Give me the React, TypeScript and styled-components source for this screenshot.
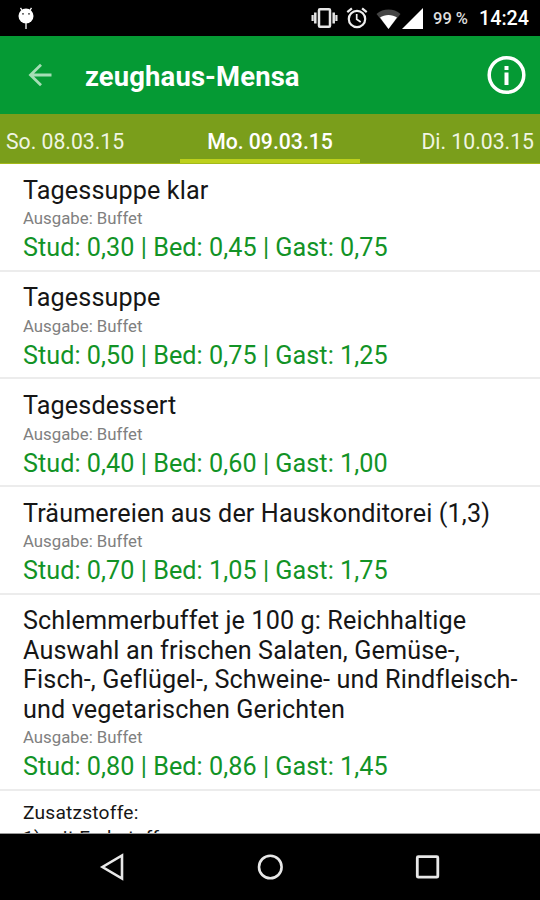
import React from "react";
import styled, { createGlobalStyle } from "styled-components";

const GlobalStyle = createGlobalStyle`
  body { margin: 0; background: #000; }
  * { box-sizing: border-box; }
`;

const Screen = styled.div`
  display: flex;
  flex-direction: column;
  width: 540px;
  height: 900px;
  overflow: hidden;
  background: #fff;
  font-family: Roboto, "Noto Sans", sans-serif;
`;

const StatusBar = styled.header`
  display: flex;
  align-items: center;
  flex: none;
  height: 36px;
  padding: 0 11px 0 16px;
  background: #000;
  color: #fff;
`;

const StatusIcons = styled.div`
  display: flex;
  align-items: center;
  margin-left: auto;
`;

const Battery = styled.span`
  width: 46px;
  font-size: 16.5px;
  font-weight: 500;
  line-height: 36px;
  color: #ddd;
  padding-top: 1px;
  white-space: nowrap;
`;

const Clock = styled.span`
  width: 50px;
  font-size: 19.7px;
  font-weight: 500;
  line-height: 36px;
  padding-top: 2px;
  white-space: nowrap;
`;

const AppBar = styled.div`
  display: flex;
  align-items: center;
  flex: none;
  height: 78px;
  padding: 0 12px 0 22px;
  background: #059a34;
  color: #fff;
`;

const Title = styled.h1`
  flex: 1;
  margin: 4px 0 0 27px;
  font-size: 27.4px;
  font-weight: 700;
  letter-spacing: 0.15px;
`;

const Tabs = styled.nav`
  display: grid;
  grid-template-columns: repeat(3, 180px);
  flex: none;
  height: 50px;
  background: #7a9e1b;
  border-bottom: 1px solid #a3b91a;
`;

const Tab = styled.div<{ $active?: boolean; $align: string }>`
  height: 49px;
  padding: 0 6px;
  border-bottom: 4px solid ${(p) => (p.$active ? "#bdd01c" : "transparent")};
  color: ${(p) => (p.$active ? "#fff" : "#f0f5e2")};
  font-size: 21.2px;
  font-weight: ${(p) => (p.$active ? 500 : 400)};
  line-height: 56px;
  text-align: ${(p) => p.$align};
  white-space: nowrap;
`;

const List = styled.main`
  flex: 1;
  min-height: 0;
  overflow: hidden;
  border-bottom: 1px solid #999;
`;

const Row = styled.article`
  padding: 11.7px 20px 7px 23px;
  border-bottom: 2px solid #ececec;
`;

const Dish = styled.h2`
  margin: 0;
  font-size: 25.2px;
  font-weight: 400;
  line-height: 29.5px;
  letter-spacing: 0.11px;
  color: #161616;
  white-space: pre;
`;

const Counter = styled.div`
  font-size: 16.8px;
  line-height: 27.5px;
  color: #808080;
`;

const Price = styled.div`
  padding-top: 0.5px;
  font-size: 25.2px;
  line-height: 29.5px;
  letter-spacing: 0.04px;
  color: #129326;
`;

const Additives = styled.div`
  padding: 9px 23px;
  font-size: 19.2px;
  line-height: 25.4px;
  letter-spacing: 0.2px;
  color: #161616;
`;

const NavBar = styled.footer`
  display: flex;
  justify-content: center;
  align-items: center;
  gap: 127px;
  flex: none;
  height: 66px;
  background: #000;
`;

const meals = [
  { name: "Tagessuppe klar", price: "Stud: 0,30 | Bed: 0,45 | Gast: 0,75" },
  { name: "Tagessuppe", price: "Stud: 0,50 | Bed: 0,75 | Gast: 1,25" },
  { name: "Tagesdessert", price: "Stud: 0,40 | Bed: 0,60 | Gast: 1,00" },
  { name: "Träumereien aus der Hauskonditorei (1,3)", price: "Stud: 0,70 | Bed: 1,05 | Gast: 1,75" },
  {
    name: "Schlemmerbuffet je 100 g: Reichhaltige\nAuswahl an frischen Salaten, Gemüse-,\nFisch-, Geflügel-, Schweine- und Rindfleisch-\nund vegetarischen Gerichten",
    price: "Stud: 0,80 | Bed: 0,86 | Gast: 1,45",
  },
];

const DroidIcon = () => (
  <svg width="19" height="24" viewBox="0 0 19 24">
    <path d="M4.500 1.800l2.500 4M15.500 1.800l-2.500 4" stroke="#fff" strokeWidth="1.300" />
    <ellipse cx="10" cy="10" rx="7.500" ry="7.500" fill="#fff" />
    <path d="M10 17v6" stroke="#ddd" strokeWidth="1.500" />
    <circle cx="7" cy="7.800" r="0.900" fill="#333" />
    <circle cx="13" cy="7.800" r="0.900" fill="#333" />
  </svg>
);

const VibrateIcon = () => (
  <svg width="27" height="22" viewBox="0 0 27 22" fill="none" stroke="#e6e6e6">
    <rect x="8" y="2.200" width="11" height="17.600" rx="1" strokeWidth="2.500" />
    <path d="M4.300 5.500v11M22.700 5.500v11" strokeWidth="2.500" />
    <path d="M1.600 8v6M25.400 8v6" strokeWidth="2.200" />
  </svg>
);

const AlarmIcon = () => (
  <svg width="22" height="22" viewBox="0 0 22 22" fill="none" stroke="#eee" strokeWidth="2.200">
    <circle cx="11" cy="12" r="8.200" />
    <path d="M1.300 5.200l4.600-3.900M20.700 5.200l-4.600-3.900" />
    <path d="M10.700 7v5.300l4 2.700" strokeWidth="1.700" />
  </svg>
);

const WifiIcon = () => (
  <svg width="25" height="20" viewBox="0 0 25 20">
    <path d="M12.500 20L.500 4.900C7-.900 18-.900 24.500 4.900z" fill="#454545" />
    <path d="M12.500 20L4 8.500C8.500 5 16.500 5 21 8.500z" fill="#fff" />
  </svg>
);

const SignalIcon = () => (
  <svg width="21" height="21" viewBox="0 0 21 21">
    <path d="M0 21L21 0v21z" fill="#fff" />
  </svg>
);

const IconSlot = styled.span<{ $gap: number; $drop?: number }>`
  display: flex;
  margin-right: ${(p) => p.$gap}px;
  padding-top: ${(p) => p.$drop ?? 0}px;
`;

export default function App() {
  return (
    <Screen>
      <GlobalStyle />
      <StatusBar>
        <DroidIcon />
        <StatusIcons>
          <IconSlot $gap={8}><VibrateIcon /></IconSlot>
          <IconSlot $gap={8}><AlarmIcon /></IconSlot>
          <IconSlot $gap={1} $drop={1}><WifiIcon /></IconSlot>
          <IconSlot $gap={10}><SignalIcon /></IconSlot>
          <Battery>99 %</Battery>
          <Clock>14:24</Clock>
        </StatusIcons>
      </StatusBar>
      <AppBar>
        <svg width="36" height="36" viewBox="0 0 36 36" fill="none" stroke="#a5deb5" strokeWidth="2.800">
          <path d="M29.500 18H8.500M19 7.700L8.500 18L19 28.300" />
        </svg>
        <Title>zeughaus-Mensa</Title>
        <svg width="42" height="42" viewBox="0 0 42 42">
          <circle cx="20.500" cy="21" r="17.300" fill="none" stroke="#fff" strokeWidth="3.500" />
          <path d="M20.500 18.500V31M20.500 12v4" stroke="#fff" strokeWidth="4" />
        </svg>
      </AppBar>
      <Tabs>
        <Tab $align="left">So. 08.03.15</Tab>
        <Tab $align="center" $active>Mo. 09.03.15</Tab>
        <Tab $align="right">Di. 10.03.15</Tab>
      </Tabs>
      <List>
        {meals.map((m) => (
          <Row key={m.name}>
            <Dish>{m.name}</Dish>
            <Counter>Ausgabe: Buffet</Counter>
            <Price>{m.price}</Price>
          </Row>
        ))}
        <Additives>
          Zusatzstoffe:
          <br />
          1) mit Farbstoff
        </Additives>
      </List>
      <NavBar>
        <svg width="30" height="30" viewBox="0 0 30 30" fill="none" stroke="#e8e8e8" strokeWidth="2.600">
          <path d="M24 3.500v23L4.500 15z" />
        </svg>
        <svg width="30" height="30" viewBox="0 0 30 30" fill="none" stroke="#e8e8e8" strokeWidth="2.600">
          <circle cx="15.300" cy="15" r="11.300" />
        </svg>
        <svg width="30" height="30" viewBox="0 0 30 30" fill="none" stroke="#e8e8e8" strokeWidth="2.800">
          <rect x="5.300" y="4.700" width="20.500" height="20.500" rx="1" />
        </svg>
      </NavBar>
    </Screen>
  );
}
